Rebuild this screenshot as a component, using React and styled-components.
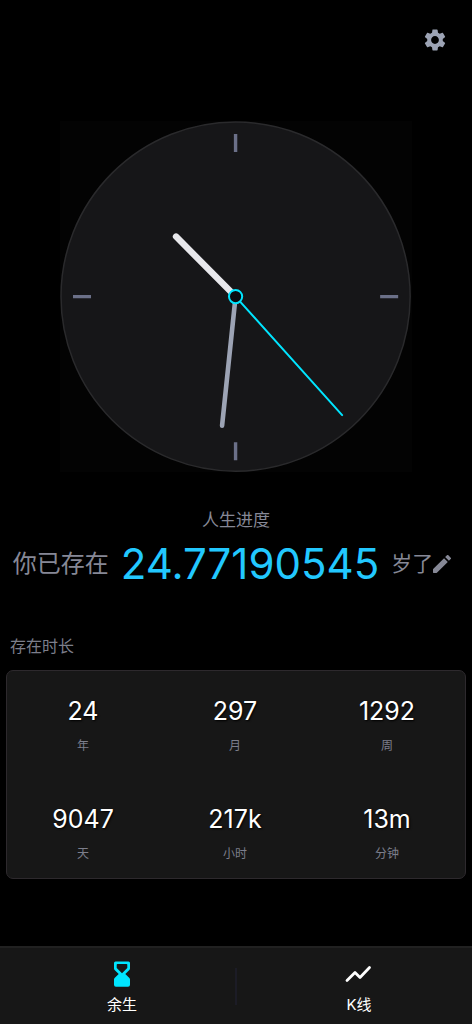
import React from "react";
import styled, { createGlobalStyle } from "styled-components";
import { MdSettings } from "react-icons/md";

const GlobalStyle = createGlobalStyle`
  *, *::before, *::after { box-sizing: border-box; }
  body {
    margin: 0;
    background: #000;
    color: #fff;
    font-family: Inter, "Noto Sans CJK SC", sans-serif;
  }
`;

const Page = styled.div`
  display: flex;
  flex-direction: column;
  min-height: 100vh;
`;

const Header = styled.header`
  display: flex;
  justify-content: flex-end;
  padding: 21px 18px;
`;

const IconButton = styled.button`
  display: flex;
  align-items: center;
  justify-content: center;
  flex: none;
  padding: ${({ $pad = 0 }) => $pad}px;
  border: 0;
  background: none;
  color: ${({ $color }) => $color};
  cursor: pointer;
`;

const Main = styled.main`
  display: flex;
  flex-direction: column;
  flex: 1;
`;

const ClockFace = styled.svg`
  display: block;
  width: 74.4%;
  max-width: 480px;
  margin: 41px auto 0;
  background: #030303;
`;

const Progress = styled.section`
  display: flex;
  flex-direction: column;
  align-items: center;
  margin-top: 36px;
`;

const ProgressTitle = styled.h1`
  margin: 0;
  color: #868896;
  font-size: 17px;
  font-weight: 400;
  line-height: 24px;
`;

const AgeRow = styled.div`
  display: flex;
  align-items: center;
  margin-top: 8px;
  padding-right: 8px;
  line-height: 48px;
  white-space: nowrap;
`;

const AgeText = styled.span`
  color: #868896;
  font-size: ${({ $size }) => $size}px;
`;

const AgeValue = styled.strong`
  margin: 0 12px;
  color: #22c8ff;
  font-size: 42px;
  font-weight: 400;
`;

const Duration = styled.section`
  padding: 0 6px;
  margin-top: 46px;
`;

const SectionTitle = styled.h2`
  margin: 0 0 12px 4px;
  color: #7c7e8b;
  font-size: 16px;
  font-weight: 400;
  line-height: 24px;
`;

const StatGrid = styled.dl`
  display: grid;
  grid-template-columns: repeat(3, 1fr);
  row-gap: 45px;
  margin: 0;
  padding: 24px 2px 12px 0;
  border: 1px solid #2d292d;
  border-radius: 7px;
  background: #171717;
`;

const Stat = styled.div`
  display: flex;
  flex-direction: column-reverse;
  align-items: center;
  gap: 7px;
`;

const StatValue = styled.dd`
  margin: 0;
  font-size: 25px;
  line-height: 32px;
  text-shadow: 1px 1px 2px #000;
`;

const StatLabel = styled.dt`
  color: #7c7e8b;
  font-size: 12px;
  line-height: 24px;
`;

const TabBar = styled.nav`
  display: flex;
  align-items: center;
  height: 78px;
  border-top: 2px solid #212121;
  background: #171717;
`;

const Tab = styled.a`
  display: flex;
  flex: 1;
  flex-direction: column;
  align-items: center;
  gap: 6px;
  padding: 6px 0 0 9px;
  color: #fff;
  font-size: 15px;
  line-height: 24px;
  text-decoration: none;
`;

const TabDivider = styled.span`
  width: 2px;
  height: 37px;
  background: #1c1c26;
`;

const STATS = [
  ["年", "24"],
  ["月", "297"],
  ["周", "1292"],
  ["天", "9047"],
  ["小时", "217k"],
  ["分钟", "13m"],
];

function Clock() {
  return (
    <ClockFace viewBox="0 0 351 351" role="img" aria-label="10:31:23">
      <circle cx="175.5" cy="175.5" r="174.5" fill="#161618" stroke="#2a2a2c" strokeWidth="1.5" />
      <g stroke="#6b7088" strokeWidth="3.4">
        <path d="M175.5 13v18M175.5 321v18M13 175.5h18M320 175.5h18" />
      </g>
      <g strokeLinecap="round">
        <path d="M175.5 175.5L116 115.5" stroke="#e8e8ec" strokeWidth="6.4" />
        <path d="M175.5 175.5L162 304.5" stroke="#9ca3b4" strokeWidth="4.6" />
        <path d="M175.5 175.5L282 294" stroke="#00e5ff" strokeWidth="2" />
      </g>
      <circle cx="175.5" cy="175.5" r="6.6" fill="#0a0a0f" stroke="#00e5ff" strokeWidth="2" />
    </ClockFace>
  );
}

function PencilIcon() {
  return (
    <svg width="18" height="18" viewBox="3 3 18 18" fill="currentColor" aria-hidden="true">
      <path d="M3 17.46v3.04c0 .28.22.5.5.5h3.04c.13 0 .26-.05.35-.15L17.81 9.94l-3.75-3.75L3.15 17.1c-.1.1-.15.22-.15.36zM20.71 7.04a.996.996 0 0 0 0-1.41l-2.34-2.34a.996.996 0 0 0-1.41 0l-1.83 1.83 3.75 3.75 1.83-1.83z" />
    </svg>
  );
}

function HourglassIcon() {
  return (
    <svg width="30" height="26" viewBox="0 0 30 26" aria-hidden="true">
      <path
        d="M8.5 0.5h13a1.5 1.5 0 0 1 1.5 1.5V7.5a2 2 0 0 1-.6 1.4L18.3 13l4.1 4.1a2 2 0 0 1 .6 1.4V23.7a2 2 0 0 1-2 2H9a2 2 0 0 1-2-2V18.5a2 2 0 0 1 .6-1.4L11.7 13 7.6 8.9A2 2 0 0 1 7 7.5V2A1.5 1.5 0 0 1 8.5 0.5zM10.5 3a.8.8 0 0 0-.8.8V7L15 12.3l5.3-5.3V3.8a.8.8 0 0 0-.8-.8z"
        fill="#00e5ff"
        fillRule="evenodd"
      />
    </svg>
  );
}

function TrendIcon() {
  return (
    <svg width="30" height="26" viewBox="0 0 30 26" aria-hidden="true">
      <path
        d="M3 19.5L11 11.5l5 5L25.500 6.5"
        fill="none"
        stroke="currentColor"
        strokeWidth="2.8"
        strokeLinecap="round"
        strokeLinejoin="round"
      />
    </svg>
  );
}

export default function App() {
  return (
    <Page>
      <GlobalStyle />
      <Header>
        <IconButton type="button" aria-label="设置" $color="#9ca3b4" $pad={6}>
          <MdSettings size={26} />
        </IconButton>
      </Header>
      <Main>
        <Clock />
        <Progress>
          <ProgressTitle>人生进度</ProgressTitle>
          <AgeRow>
            <AgeText $size={24}>你已存在</AgeText>
            <AgeValue>24.77190545</AgeValue>
            <AgeText $size={21}>岁了</AgeText>
            <IconButton type="button" aria-label="编辑" $color="#868896">
              <PencilIcon />
            </IconButton>
          </AgeRow>
        </Progress>
        <Duration>
          <SectionTitle>存在时长</SectionTitle>
          <StatGrid>
            {STATS.map(([label, value]) => (
              <Stat key={label}>
                <StatLabel>{label}</StatLabel>
                <StatValue>{value}</StatValue>
              </Stat>
            ))}
          </StatGrid>
        </Duration>
      </Main>
      <TabBar>
        <Tab href="#life" aria-current="page">
          <HourglassIcon />
          余生
        </Tab>
        <TabDivider />
        <Tab href="#kline">
          <TrendIcon />
          K线
        </Tab>
      </TabBar>
    </Page>
  );
}
